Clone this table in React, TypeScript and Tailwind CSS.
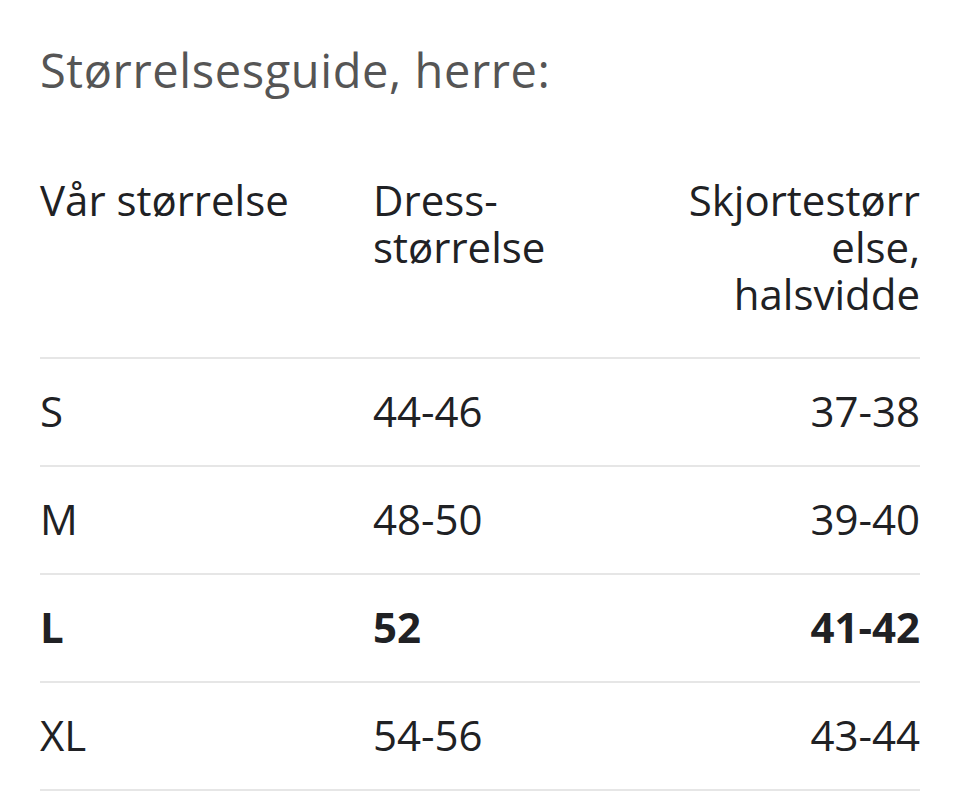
import React from "react";

const rows = [
  { a: "S", b: "44-46", c: "37-38", bold: false },
  { a: "M", b: "48-50", c: "39-40", bold: false },
  { a: "L", b: "52", c: "41-42", bold: true },
  { a: "XL", b: "54-56", c: "43-44", bold: false },
];

export default function App() {
  return (
    <div
      className="min-h-[800px] w-[960px] bg-white px-10 pt-[41px] text-[#202124]"
      style={{ fontFamily: "'Open Sans', 'Noto Sans', sans-serif" }}
    >
      <h1 className="text-[47px] leading-[58px] tracking-[0.6px] text-[#555555]">Størrelsesguide, herre:</h1>
      <div className="mt-[77px]">
        <div className="grid grid-cols-[333px_1fr_240px] pb-[40px] text-[42px] leading-[47px]">
          <div>Vår størrelse</div>
          <div>
            <span className="block">Dress-</span>
            <span className="block">størrelse</span>
          </div>
          <div className="text-right">
            <span className="block">Skjortestørr</span>
            <span className="block">else,</span>
            <span className="block">halsvidde</span>
          </div>
        </div>
        {rows.map((r) => (
          <div
            key={r.a}
            className={`grid h-[108px] grid-cols-[333px_1fr_240px] items-center border-t-2 border-[#e6e6e6] pb-[4px] text-[42px] ${
              r.bold ? "font-bold" : ""
            }`}
          >
            <div>{r.a}</div>
            <div>{r.b}</div>
            <div className="text-right">{r.c}</div>
          </div>
        ))}
        <div className="border-t-2 border-[#e6e6e6]" />
      </div>
    </div>
  );
}
